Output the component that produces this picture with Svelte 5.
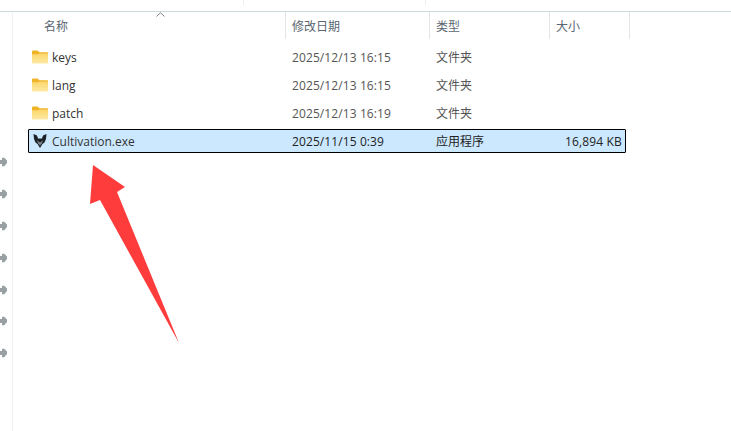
<script>
  const columns = [
    { label: "名称", cls: "name" },
    { label: "修改日期", cls: "date" },
    { label: "类型", cls: "type" },
    { label: "大小", cls: "size" },
  ];
  const rows = [
    { name: "keys", date: "2025/12/13 16:15", type: "文件夹", size: "" },
    { name: "lang", date: "2025/12/13 16:15", type: "文件夹", size: "" },
    { name: "patch", date: "2025/12/13 16:19", type: "文件夹", size: "" },
    { name: "Cultivation.exe", date: "2025/11/15 0:39", type: "应用程序", size: "16,894 KB", exe: true },
  ];
  const pins = [0, 1, 2, 3, 4, 5, 6];
</script>

<div class="window">
  <div class="toolbar">
    <span class="tick first"></span>
    <span class="tick second"></span>
  </div>
  <div class="body">
    <aside class="side">
      {#each pins as pin (pin)}
        <svg class="pin" width="7" height="10" viewBox="0 0 7 10">
          <path d="M0 3 L2 3 L2 1 L4 0.5 L7 3.5 L7 6 L4 9.5 L2 9 L2 7 L0 7 Z" fill="#98a0a4" />
        </svg>
      {/each}
    </aside>
    <main class="list">
      <div class="head">
        {#each columns as col}
          <div class="hcell {col.cls}">{col.label}</div>
        {/each}
        <svg class="sort" width="9" height="5" viewBox="0 0 9 5">
          <path d="M0.5 4.5 L4.5 0.8 L8.5 4.5" fill="none" stroke="#7f8589" stroke-width="1" />
        </svg>
      </div>
      <div class="rows">
        {#each rows as row}
          <div class="row" class:selected={row.exe}>
            <div class="cell name">
              {#if row.exe}
                <svg class="icon" width="16" height="16" viewBox="0 0 16 16">
                  <path d="M1.5 1 L5 2.5 L6 5.5 L10 5.5 L11 2.5 L14.5 1 L14 6 L12.5 9.5 L10.5 11 L8 15 L5.5 11 L3.5 9.5 L2 6 Z" fill="#1e2226" />
                  <path d="M5 7.5 L8 9.5 L11 7.5 L9.8 10.5 L8 12.5 L6.2 10.5 Z" fill="#808890" />
                </svg>
              {:else}
                <svg class="icon" width="16" height="14" viewBox="0 0 16 14">
                  <defs>
                    <linearGradient id="folder-body" x1="0" y1="0" x2="0" y2="1">
                      <stop offset="0" stop-color="#fbd568" />
                      <stop offset="1" stop-color="#fde9a4" />
                    </linearGradient>
                  </defs>
                  <path d="M0 1.5 Q0 0.5 1 0.5 L5.5 0.5 L7.5 2.2 L15 2.2 Q16 2.2 16 3.2 L16 5 L0 5 Z" fill="#f0b429" />
                  <path d="M0 4.2 L6 4.2 L7.5 3.4 L15 3.4 Q16 3.4 16 4.4 L16 12.5 Q16 13.5 15 13.5 L1 13.5 Q0 13.5 0 12.5 Z" fill="url(#folder-body)" />
                </svg>
              {/if}
              <span>{row.name}</span>
            </div>
            <div class="cell date">{row.date}</div>
            <div class="cell type">{row.type}</div>
            <div class="cell size">{row.size}</div>
          </div>
        {/each}
      </div>
    </main>
  </div>
  <svg class="arrow" width="100" height="190" viewBox="0 0 100 190">
    <path d="M4 1 L36 23 L28 28 L90 179 L11 36 L1 40 Z" fill="#fe3c3c" />
  </svg>
</div>

<style>
  :global(body) {
    background: #fff;
  }

  .window {
    position: relative;
    width: 731px;
    height: 431px;
    overflow: hidden;
    background: #fff;
    font-family: "Open Sans", "Noto Sans CJK SC", sans-serif;
    font-size: 12px;
    color: #555;
  }

  .toolbar {
    position: relative;
    height: 12px;
    box-sizing: border-box;
    border-bottom: 1px solid #d0d9de;
    display: flex;
  }

  .tick {
    width: 1px;
    height: 5px;
    background: #eeeeee;
  }

  .tick.first {
    margin-left: 243px;
  }

  .tick.second {
    margin-left: 181px;
  }

  .body {
    display: flex;
    height: 419px;
  }

  .side {
    width: 13px;
    flex: none;
    box-sizing: border-box;
    border-right: 1px solid #eef0f1;
    padding-top: 145px;
    display: flex;
    flex-direction: column;
    gap: 21.9px;
  }

  .pin {
    display: block;
    flex: none;
  }

  .list {
    flex: 1;
    min-width: 0;
  }

  .head {
    position: relative;
    display: flex;
    height: 27px;
    padding-left: 15px;
    color: #5a6670;
  }

  .sort {
    position: absolute;
    left: 143px;
    top: 0;
  }

  .hcell {
    box-sizing: border-box;
    display: flex;
    align-items: center;
    border-right: 1px solid #e5e5e5;
    height: 27px;
    padding-left: 6px;
  }

  .hcell.name {
    width: 258px;
    padding-left: 16px;
  }

  .hcell.date {
    width: 144px;
  }

  .hcell.type {
    width: 120px;
  }

  .hcell.size {
    width: 80px;
  }

  .rows {
    display: flex;
    flex-direction: column;
    gap: 4px;
    padding-top: 6px;
  }

  .row {
    display: flex;
    align-items: center;
    box-sizing: border-box;
    width: 598px;
    height: 24px;
    margin-left: 15px;
    border: 1px solid transparent;
  }

  .row.selected {
    background: #cce8ff;
    border-color: #000;
    border-radius: 1px;
    color: #222;
  }

  .cell {
    box-sizing: border-box;
    white-space: nowrap;
  }

  .cell.name {
    width: 256px;
    display: flex;
    align-items: center;
    padding-left: 3px;
    color: #333;
    gap: 4px;
  }

  .icon {
    flex: none;
    width: 16px;
  }

  .cell.date {
    width: 144px;
    padding-left: 7px;
    letter-spacing: 0.1px;
  }

  .cell.type {
    width: 120px;
    padding-left: 7px;
  }

  .cell.size {
    width: 76px;
    text-align: right;
    padding-right: 3px;
    letter-spacing: 0.15px;
  }

  .arrow {
    position: absolute;
    left: 89px;
    top: 164px;
  }
</style>
